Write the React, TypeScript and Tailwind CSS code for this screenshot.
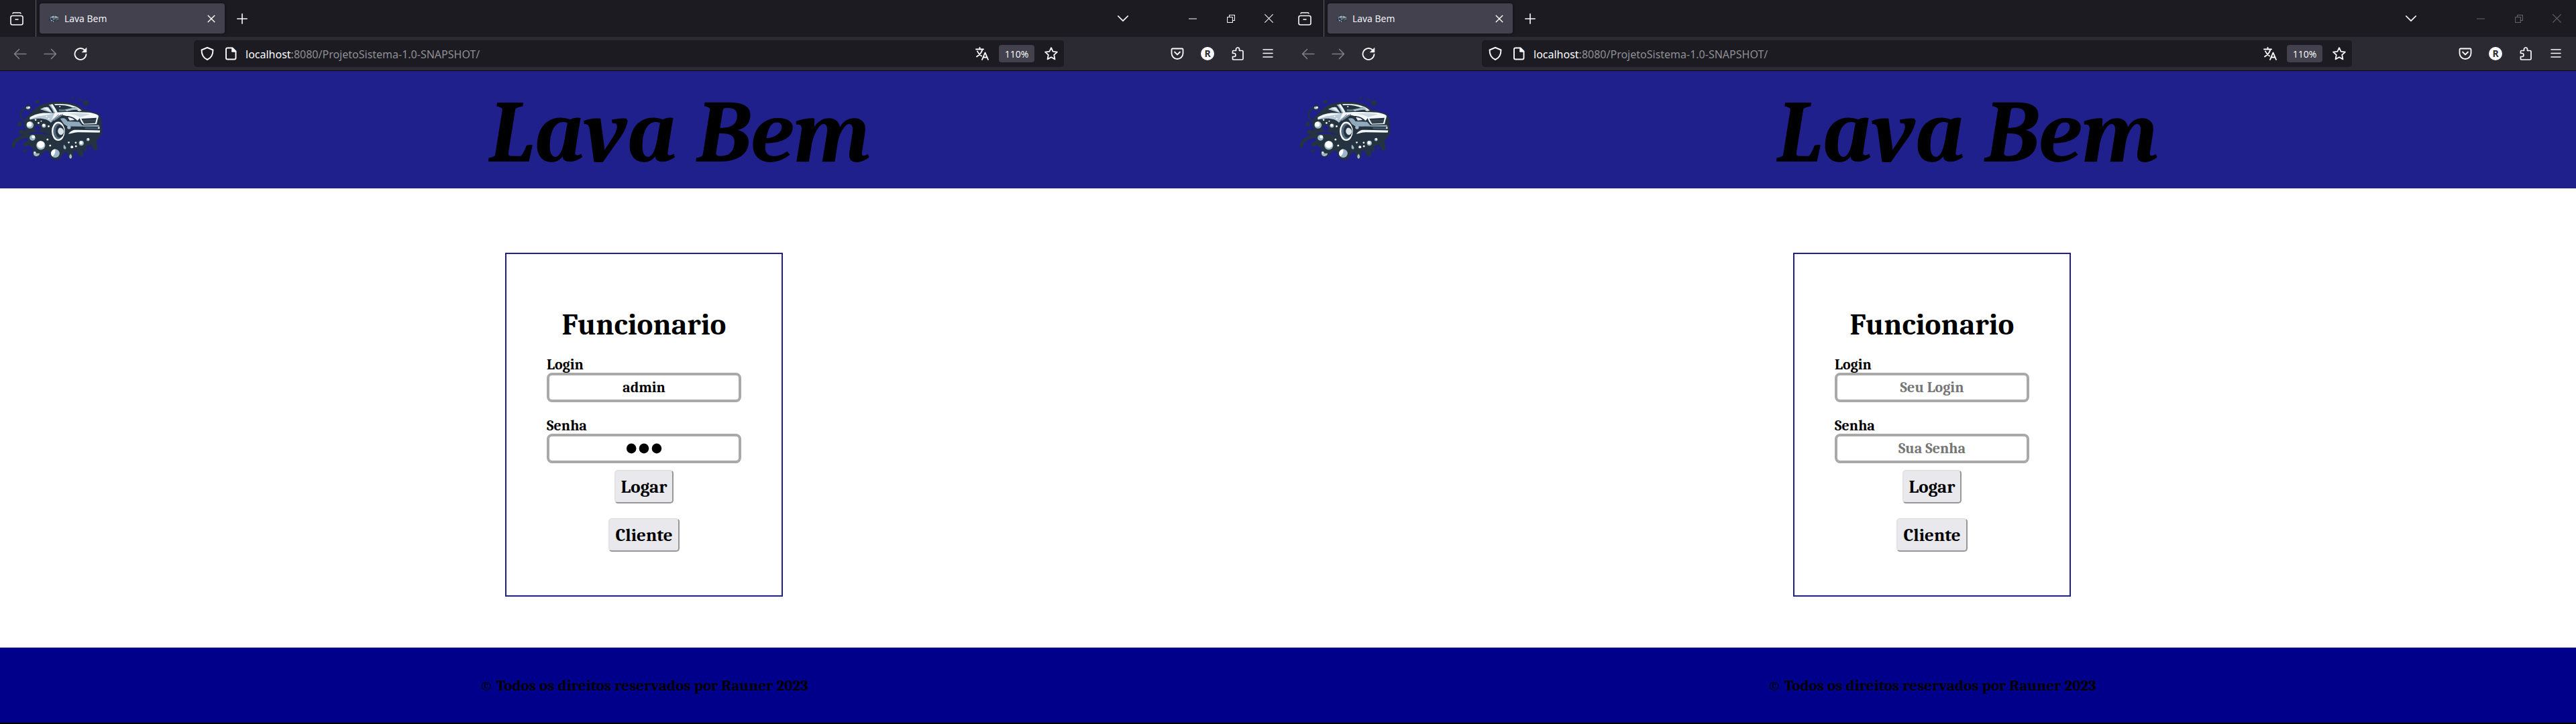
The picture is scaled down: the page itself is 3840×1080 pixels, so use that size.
import React from "react";

type IconProps = { size?: number; className?: string; children: React.ReactNode };

function Icon({ size = 20, className = "", children }: IconProps) {
  return (
    <svg
      width={size}
      height={size}
      viewBox="0 0 20 20"
      fill="none"
      stroke="currentColor"
      strokeWidth="1.6"
      strokeLinecap="round"
      strokeLinejoin="round"
      className={`shrink-0 ${className}`}
      aria-hidden="true"
    >
      {children}
    </svg>
  );
}

function CarLogo({ className = "" }: { className?: string }) {
  return (
    <svg viewBox="50 130 410 290" className={`shrink-0 ${className}`} aria-hidden="true">
      <g fill="#25323f">
        <path d="M108 262C104 240 118 222 134 210C150 190 172 172 196 165C225 156 262 155 290 158C325 161 352 172 372 192L420 205C440 209 452 222 453 246C450 262 456 278 455 298C440 312 436 326 424 336L366 366C340 380 322 374 300 382C290 380 282 384 278 390C272 408 262 417 247 416C230 415 222 404 220 384C212 368 200 376 190 384C180 402 166 408 154 402C142 394 142 384 150 368L128 350C112 362 98 352 104 342C112 334 124 334 130 322C100 312 70 334 66 352C62 366 50 366 52 350C56 326 80 310 106 302C88 306 78 292 86 284C94 276 110 284 116 288Z" />
        <path d="M300 372Q300 412 315 412Q330 410 326 374ZM340 368Q346 402 362 403Q378 398 364 364ZM364 360Q372 380 382 380Q394 374 376 352ZM404 340Q416 376 428 374Q442 366 428 332Z" />
        <circle cx="382" cy="162" r="12" />
        <circle cx="358" cy="147" r="5" />
        <circle cx="324" cy="139" r="5" />
        <circle cx="165" cy="156" r="8" />
        <circle cx="87" cy="256" r="10" />
        <circle cx="109" cy="376" r="7" />
        <circle cx="400" cy="362" r="5" />
      </g>
      <path d="M112 246C88 232 84 200 108 186L122 182" fill="none" stroke="#25323f" strokeWidth="7" strokeLinecap="round" />
      <circle cx="126" cy="183" r="12" fill="#25323f" />
      <ellipse cx="124" cy="183" rx="9" ry="6" fill="#a9c2d4" />
      <circle cx="129" cy="181" r="4" fill="#fff" />
      <path d="M132 234C134 222 160 210 222 206L276 206L240 236L226 250C210 232 180 226 134 236Z" fill="#b7cad8" />
      <path d="M132 226C160 208 196 202 234 210L190 218C166 220 146 228 132 234Z" fill="#f3f7fa" />
      <path d="M178 190Q204 176 216 182L232 206Z" fill="#b7cad8" />
      <path d="M190 184L210 180L230 203Z" fill="#e9f0f5" />
      <path d="M216 170L232 168C240 182 248 192 254 204L238 204C232 190 226 180 216 170Z" fill="#9db7c8" />
      <path d="M224 169L234 167C242 180 250 192 256 204L244 204C240 190 232 180 224 169Z" fill="#f3f7fa" />
      <path d="M240 167C290 162 340 170 364 196L350 198C322 176 286 168 246 172Z" fill="#e9f0f5" />
      <path d="M262 190C290 192 310 186 332 180L340 184C320 196 290 200 262 198Z" fill="#5f788b" />
      <path d="M290 192C310 188 326 184 340 182L352 193C330 190 312 195 296 199Z" fill="#a9bfce" />
      <path d="M244 204C290 200 350 202 396 204C424 208 440 216 440 222L356 228L346 240C320 240 300 238 296 220L270 214L226 246Z" fill="#f3f7fa" />
      <path d="M300 210C336 206 376 208 400 212L356 226C340 214 320 212 300 210Z" fill="#c9d8e2" />
      <path d="M228 244L262 214M240 240L280 212" stroke="#7890a3" strokeWidth="4" fill="none" />
      <path d="M268 232C284 226 294 232 300 244L352 246L366 262L440 260L444 268L300 266L284 256Z" fill="#90a9bb" />
      <path d="M294 220C316 220 332 228 344 240L306 244C298 238 296 228 294 220Z" fill="#25323f" />
      <path d="M302 226C316 226 326 232 332 238L310 240Z" fill="#e9f0f5" />
      <path d="M354 226L432 218Q442 222 436 232L430 256L372 258Q358 248 354 226Z" fill="#f3f7fa" />
      <path d="M362 232L430 228L424 252L374 254Z" fill="#25323f" />
      <path d="M364 240H426M368 247H424" stroke="#52687a" strokeWidth="2" />
      <path d="M304 300C316 284 328 280 344 282L446 284L444 294L346 292C328 294 318 298 304 300Z" fill="#f3f7fa" />
      <path d="M376 270L444 272L442 280L380 278Z" fill="#40566a" />
      <path d="M120 302C150 286 196 288 222 306C196 298 150 298 120 302Z" fill="#20208c" />
      <ellipse cx="258" cy="288" rx="33" ry="46" fill="#25323f" />
      <ellipse cx="259" cy="288" rx="26" ry="39" fill="#51697c" stroke="#f3f7fa" strokeWidth="7" />
      <ellipse cx="266" cy="288" rx="19" ry="29" fill="#25323f" />
      <path d="M257 288Q258 272 270 272Q283 276 284 290Q280 306 268 304Q258 300 257 288Z" fill="#d5e2eb" />
      <g fill="#9db7c8">
        <circle cx="133" cy="260" r="16" />
        <circle cx="181" cy="351" r="20" />
        <circle cx="246" cy="387" r="19" />
        <circle cx="144" cy="317" r="13" />
        <circle cx="195" cy="263" r="9" />
        <circle cx="307" cy="271" r="8" />
        <circle cx="362" cy="341" r="11" />
        <circle cx="392" cy="325" r="7" />
        <path d="M152 376A14 14 0 1 0 176 386Q158 390 152 376ZM314 388Q326 404 314 411Q302 404 314 388ZM284 348Q300 362 290 369Q278 366 284 348Z" />
      </g>
      <g fill="#fff">
        <circle cx="130" cy="257" r="11" />
        <circle cx="181" cy="347" r="16" />
        <path d="M246 368A19 19 0 0 0 232 400Q248 392 246 368Z" />
        <circle cx="148" cy="313" r="7" />
        <circle cx="194" cy="261" r="6" />
        <circle cx="361" cy="339" r="7" />
        <circle cx="393" cy="323" r="4" />
        <circle cx="158" cy="237" r="4" />
        <circle cx="171" cy="251" r="4" />
        <circle cx="183" cy="243" r="3" />
        <circle cx="207" cy="222" r="3" />
        <circle cx="217" cy="232" r="3" />
        <circle cx="216" cy="266" r="4" />
        <circle cx="211" cy="325" r="4" />
        <circle cx="223" cy="352" r="4" />
        <circle cx="306" cy="338" r="4" />
        <circle cx="320" cy="358" r="6" />
        <circle cx="337" cy="339" r="4" />
        <circle cx="338" cy="355" r="4" />
        <circle cx="266" cy="178" r="3" />
        <circle cx="440" cy="273" r="4" />
        <circle cx="155" cy="383" r="4" />
      </g>
      <circle cx="167" cy="274" r="13" fill="#20208c" />
    </svg>
  );
}

function TabStrip({ active }: { active: boolean }) {
  const controls = active ? "text-[#fbfbfe]" : "text-[#66656b]";
  return (
    <div className="flex h-[55px] items-center bg-[#1c1b22] text-[#fbfbfe]">
      <button aria-label="Firefox View" className="flex h-full w-[54px] items-center border-r border-[#5b5a62] pl-[15px]">
        <Icon>
          <rect x="1" y="5.5" width="18" height="13.5" rx="2.5" />
          <path d="M4 2Q4.500 1 5.500 1H14.500Q15.500 1 16 2M8 11H12" />
        </Icon>
      </button>
      <div className="ml-[5px] flex h-[45px] w-[276px] items-center rounded bg-[#42414d] pl-[13px] pr-[14px] shadow-[0_0_4px_rgba(0,0,0,0.5)]">
        <CarLogo className="w-4" />
        <span className="ml-2 flex-1 text-[14px]">Lava Bem</span>
        <button aria-label="Fechar aba">
          <Icon size={12}>
            <path d="M2 2L18 18M18 2L2 18" strokeWidth="2.400" />
          </Icon>
        </button>
      </div>
      <button aria-label="Nova aba" className="ml-[18px]">
        <Icon size={16}>
          <path d="M10 1V19M1 10H19" strokeWidth="2" />
        </Icon>
      </button>
      <div className="ml-auto flex h-full items-center">
        <button aria-label="Listar abas" className="mr-[67px]">
          <Icon size={16}>
            <path d="M1 5L10 14L19 5" strokeWidth="2.200" />
          </Icon>
        </button>
        <div className={`flex h-full ${controls}`}>
          <button aria-label="Minimizar" className="flex w-[57px] items-center justify-center">
            <Icon size={12}>
              <path d="M0 10H20" strokeWidth="1.700" strokeLinecap="butt" />
            </Icon>
          </button>
          <button aria-label="Restaurar" className="flex w-[57px] items-center justify-center">
            <Icon size={12}>
              <path d="M1 6H14V19H1ZM6 6V1H19V14H14" strokeWidth="1.700" strokeLinejoin="miter" />
            </Icon>
          </button>
          <button aria-label="Fechar" className="flex w-[57px] items-center justify-center">
            <Icon size={13}>
              <path d="M1 1L19 19M19 1L1 19" />
            </Icon>
          </button>
        </div>
      </div>
    </div>
  );
}

function NavBar() {
  return (
    <div className="flex h-[51px] items-center border-b border-[#0c0c0d] bg-[#2b2a33] text-[#fbfbfe]">
      <div className="flex w-[289px] items-center gap-[25px] pl-5">
        <button aria-label="Voltar" className="text-[#7f7e85]">
          <Icon>
            <path d="M19 10.500H1.500M8.500 3.500L1.500 10.500L8.500 17.500" />
          </Icon>
        </button>
        <button aria-label="Avançar" className="text-[#7f7e85]">
          <Icon>
            <path d="M1 10.500H18.500M11.500 3.500L18.500 10.500L11.500 17.500" />
          </Icon>
        </button>
        <button aria-label="Recarregar">
          <Icon>
            <path d="M18.500 11A8.500 8.500 0 1 1 16 4.500" strokeWidth="1.800" />
            <path d="M19 1.500V8H12.500Z" fill="currentColor" strokeWidth="0.500" />
          </Icon>
        </button>
      </div>
      <div className="flex h-10 flex-1 items-center rounded-[5px] bg-[#1c1b22] pl-[10px] pr-[9px]">
        <Icon>
          <path d="M10 1L18.500 4.500C18.500 11 16 16.500 10 19C4 16.500 1.500 11 1.500 4.500Z" strokeWidth="1.900" />
        </Icon>
        <Icon className="ml-[15px]">
          <path d="M5 1.500H12.500L17.500 6.500V16.500Q17.500 18.500 15.500 18.500H5Q3 18.500 3 16.500V3.500Q3 1.500 5 1.500Z" strokeWidth="1.900" />
          <path d="M12 1.500V7H17.500Z" fill="currentColor" />
        </Icon>
        <span className="ml-3 flex-1 whitespace-nowrap pt-0.5 font-['Noto_Sans',sans-serif] text-[16px] text-[#8f8f94]">
          <span className="text-[#fbfbfe]">localhost</span>:8080/ProjetoSistema-1.0-SNAPSHOT/
        </span>
        <button aria-label="Traduzir">
          <Icon>
            <path d="M1 3.500H12M6.500 1V3.500M10.500 3.500C9.500 8 6 12 2 14.500M3 6.500C4.500 10 6.500 12 9 13.500M10 19L14.500 8.500L19 19M11.500 15.500H17.500" strokeWidth="1.900" />
          </Icon>
        </button>
        <button className="ml-[15px] h-[26px] w-[53px] rounded bg-[#42414d] text-[14px]">110%</button>
        <button aria-label="Favoritar" className="ml-[15px]">
          <Icon>
            <path d="M10 1.200L12.600 6.900L18.900 7.600L14.200 11.900L15.500 18.400L10 15.200L4.500 18.400L5.800 11.900L1.100 7.600L7.400 6.900Z" strokeWidth="1.800" />
          </Icon>
        </button>
      </div>
      <div className="flex w-[334px] items-center justify-end gap-[25px] pr-5">
        <button aria-label="Pocket">
          <Icon>
            <path d="M3 2.500H17Q18.500 2.500 18.500 4V9.500A8.500 8.500 0 0 1 1.500 9.500V4Q1.500 2.500 3 2.500ZM6 7.500L10 11.500L14 7.500" strokeWidth="1.800" />
          </Icon>
        </button>
        <button aria-label="Conta" className="flex size-5 items-center justify-center rounded-full bg-[#fbfbfe] text-[14px] font-bold leading-5 text-[#2b2a33]">
          R
        </button>
        <button aria-label="Extensões">
          <Icon>
            <path d="M2.500 8V6.500Q2.500 5.500 3.500 5.500H7.500V3.500A2.500 2.500 0 0 1 12.500 3.500V5.500H16.500Q18 5.500 18 7V17.500Q18 19 16.500 19H3.500Q2.500 19 2.500 18V14.500H4.500A2.500 2.500 0 0 0 4.500 9.500H2.500Z" strokeWidth="1.700" />
          </Icon>
        </button>
        <button aria-label="Menu">
          <Icon>
            <path d="M3 4H17M3 9.500H17M3 15H17" />
          </Icon>
        </button>
      </div>
    </div>
  );
}

const field =
  "h-11 w-full rounded-lg border-4 border-[#a9a9a9] bg-white text-center font-bold text-black outline-none placeholder:text-[#757575] placeholder:opacity-100";
// Filled password boxes use a larger size so that the masking dots are big and round.
const secret =
  "font-['Liberation_Serif',serif] text-[54px] placeholder-shown:font-['Cambria','Liberation_Serif',serif] placeholder-shown:text-[22px]";
const action =
  "h-[50px] rounded-[5px] border-2 border-b-[#979797] border-l-[#e3e3e3] border-r-[#979797] border-t-[#e3e3e3] bg-[#e9e9ed] px-2 pt-0.5 text-[27px] font-bold leading-8";

function LoginCard({ id, login, senha }: { id: string; login: string; senha: string }) {
  return (
    <form className="flex w-[414px] flex-col items-center border-2 border-[#20208c] px-[60px] pb-[65px] pt-[78px]">
      <h2 className="text-[45px] font-bold leading-[54px]">Funcionario</h2>
      <label htmlFor={`${id}-login`} className="mt-[21px] self-start text-[22px] font-bold leading-6">
        Login
      </label>
      <input id={`${id}-login`} type="text" defaultValue={login} placeholder="Seu Login" className={`text-[22px] ${field}`} />
      <label htmlFor={`${id}-senha`} className="mt-[23px] self-start text-[22px] font-bold leading-6">
        Senha
      </label>
      <input id={`${id}-senha`} type="password" defaultValue={senha} placeholder="Sua Senha" className={`${secret} ${field}`} />
      <button type="button" className={`mt-[10px] ${action}`}>
        Logar
      </button>
      <button type="button" className={`mt-[22px] ${action}`}>
        Cliente
      </button>
    </form>
  );
}

type WindowProps = { id: string; active: boolean; login: string; senha: string };

function BrowserWindow({ id, active, login, senha }: WindowProps) {
  return (
    <section className="flex min-h-screen flex-col border-b-2 border-black bg-white text-black">
      <div className="font-['Open_Sans',sans-serif]">
        <TabStrip active={active} />
        <NavBar />
      </div>
      <div className="flex flex-1 flex-col font-['Cambria','Liberation_Serif',serif]">
        <header className="flex h-[175px] items-center bg-[#20208c] pl-[17px]">
          <CarLogo className="mb-1 w-[137px]" />
          <h1 className="flex-1 pr-12 pt-2 text-center text-[132px] font-bold italic leading-[150px]">Lava Bem</h1>
        </header>
        <main className="flex flex-1 flex-col items-center pb-[76px] pt-24">
          <LoginCard id={id} login={login} senha={senha} />
        </main>
        <footer className="flex h-28 items-center justify-center bg-[#00008b]">
          <p className="pt-0.5 text-[23px] font-bold leading-7">© Todos os direitos reservados por Rauner 2023</p>
        </footer>
      </div>
    </section>
  );
}

export default function App() {
  return (
    <div className="grid grid-cols-2">
      <BrowserWindow id="esquerda" active login="admin" senha="123" />
      <BrowserWindow id="direita" active={false} login="" senha="" />
    </div>
  );
}
